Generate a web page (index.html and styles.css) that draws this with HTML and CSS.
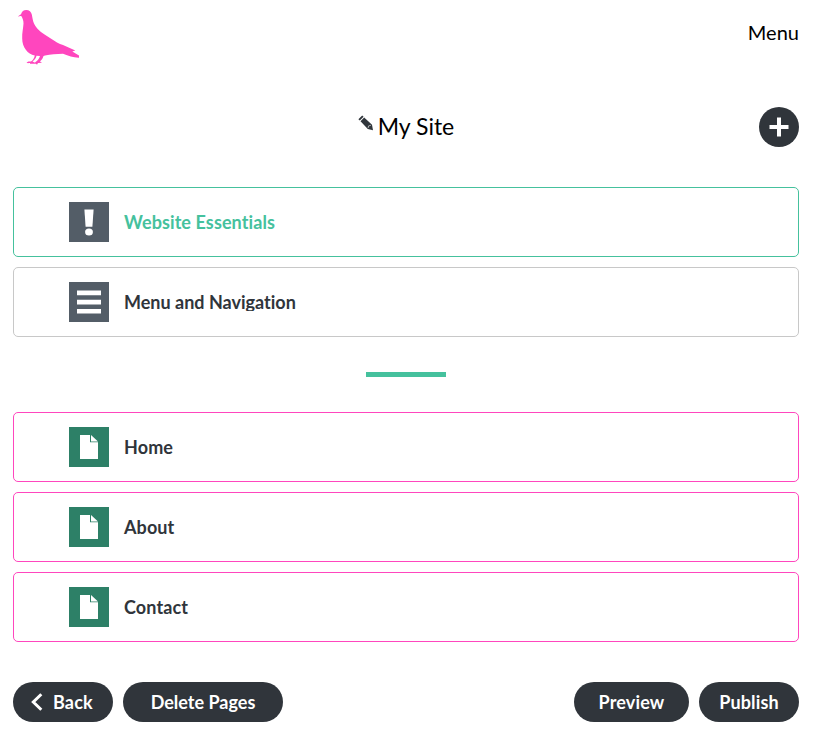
FILE: index.html
```html
<!DOCTYPE html>
<html lang="en">
<head>
<meta charset="utf-8">
<title>My Site</title>
<link rel="stylesheet" href="styles.css">
</head>
<body>
<header class="topbar">
  <svg class="logo" viewBox="0 0 80 75" width="80" height="75" aria-label="Pigeon">
    <path fill="#ff46be" d="M8 16.700C9.200 15.300 10 15.100 11 14.300C11.700 11.200 13.700 9.900 16.200 9.900C19.400 9.900 21.200 11.700 21.800 14.500C22.500 17.900 22.800 20.700 24 23.500C26.500 29 31.500 32.800 36.500 35.700L47 42.500C49 43.700 51 44.400 53 45L65.300 50.500L62.300 51.400L69 55.500V57.700C63 57.800 59 56 53 53.800C46 54 41 54.400 35 55.400L33.500 56C32.800 58.500 31.500 60 30 61.500L32 62.800L28 63L27 64.700L26 63.700H20L20 62.600H25C27 61 29 59.500 30 56.100L26.500 55.800C26 58.500 24.500 60 22.500 61.500L24.500 62.500L20 62.700L18 63.300L16.500 62.500L18.500 61.600H21C23 60.300 24.200 58.500 24.800 55.600C21 54.500 18 52.800 16 50C13.500 47 12.200 43 12.200 38.500C11.900 33 13.300 28 13.500 23.500C13.500 20.500 12.500 18.300 11.500 16.300C10.500 15.900 9.500 16 8 16.700Z"/>
  </svg>
  <a class="menu">Menu</a>
</header>

<main class="page">
  <div class="heading">
    <div class="site-name">
      <svg class="pencil" viewBox="0 0 16 16" width="16" height="16">
        <path fill="#30353b" d="M.4 4.200 4.200.400 5.600 1.800 1.800 5.600ZM2.500 6.200 6.200 2.500 14 9.700 15 15.200 9.800 14Z"/>
        <path fill="none" stroke="#fff" stroke-width=".6" d="m10.100 13 .5-2.100 2.300-.6"/>
      </svg>
      <h1>My Site</h1>
    </div>
    <button class="add" aria-label="Add">
      <svg viewBox="0 0 20 20" width="20" height="20"><path fill="#fff" d="M8 .5h4V8h7.500v4H12v7.500H8V12H.5V8H8Z"/></svg>
    </button>
  </div>

  <ul class="rows">
    <li class="row essentials">
      <svg class="icon" viewBox="0 0 40 40"><path fill="#fff" d="M15.400 7.500h9.200l-1.200 17.300h-6.800Z"/><ellipse cx="20" cy="30" rx="3.900" ry="3.600" fill="#fff"/></svg>
      <span class="label">Website Essentials</span>
    </li>
    <li class="row navigation">
      <svg class="icon" viewBox="0 0 40 40"><path fill="#fff" d="M8 8.500h24v4.800H8ZM8 17.800h24v4.700H8ZM8 27h24v4.600H8Z"/></svg>
      <span class="label">Menu and Navigation</span>
    </li>
  </ul>

  <div class="divider"></div>

  <ul class="rows">
    <li class="row web-page">
      <svg class="icon" viewBox="0 0 40 40"><path fill="#fff" d="M11 8h10v7.300h8V32H11ZM22 8 29 14.500H22Z"/></svg>
      <span class="label">Home</span>
    </li>
    <li class="row web-page">
      <svg class="icon" viewBox="0 0 40 40"><path fill="#fff" d="M11 8h10v7.300h8V32H11ZM22 8 29 14.500H22Z"/></svg>
      <span class="label">About</span>
    </li>
    <li class="row web-page">
      <svg class="icon" viewBox="0 0 40 40"><path fill="#fff" d="M11 8h10v7.300h8V32H11ZM22 8 29 14.500H22Z"/></svg>
      <span class="label">Contact</span>
    </li>
  </ul>

  <footer class="actions">
    <button class="button back">
      <svg viewBox="0 0 12 18" width="12" height="18"><path fill="none" stroke="#fff" stroke-width="3" d="M10.300 1.200 2.300 9l8 7.800"/></svg>
      Back
    </button>
    <button class="button delete">Delete Pages</button>
    <button class="button preview">Preview</button>
    <button class="button publish">Publish</button>
  </footer>
</main>
</body>
</html>
```
FILE: styles.css
```css
* {
  box-sizing: border-box;
}

body {
  margin: 0;
  background: #fff;
  color: #000;
  font-family: Lato, sans-serif;
  font-variant-ligatures: none;
}

.topbar {
  display: flex;
  justify-content: space-between;
  height: 75px;
  padding: 0 24px 0 10px;
}

.logo {
  display: block;
}

.menu {
  margin-top: 19px;
  font-size: 20px;
  line-height: 26px;
}

.page {
  padding: 32px 24px 0 13px;
}

.heading {
  display: grid;
  grid-template-columns: 40px 1fr 40px;
  height: 40px;
  margin-bottom: 40px;
}

.site-name {
  grid-column: 2;
  display: flex;
  justify-content: center;
  gap: 4px;
}

.pencil {
  margin-top: 8px;
}

h1 {
  margin: 0;
  font-size: 23px;
  font-weight: 400;
  line-height: 39px;
}

button {
  padding: 0;
  border: 0;
  background: #30353b;
  color: #fff;
  font-family: inherit;
  font-variant-ligatures: none;
}

.add {
  grid-column: 3;
  display: flex;
  align-items: center;
  justify-content: center;
  border-radius: 50%;
}

.rows {
  display: flex;
  flex-direction: column;
  gap: 10px;
  margin: 0;
  padding: 0;
  list-style: none;
}

.row {
  display: flex;
  align-items: center;
  gap: 15px;
  height: 70px;
  padding-left: 55px;
  border: 1px solid #c8c8c8;
  border-radius: 5px;
  color: #30353b;
}

.icon {
  width: 40px;
  height: 40px;
  background: #535d67;
}

.label {
  font-size: 18px;
  font-weight: 700;
  line-height: 18px;
}

.navigation .label {
  overflow: hidden;
}

.essentials {
  border-color: #45c19d;
  color: #45c19d;
  letter-spacing: .1px;
}

.web-page {
  border-color: #ff46be;
  letter-spacing: .1px;
}

.web-page .icon {
  background: #2d8067;
}

.divider {
  width: 80px;
  height: 5px;
  margin: 35px auto;
  background: #45c19d;
}

.actions {
  display: flex;
  gap: 10px;
  margin-top: 40px;
}

.button {
  height: 40px;
  border-radius: 20px;
  font-size: 18px;
  font-weight: 700;
  line-height: 40px;
}

.back {
  display: flex;
  align-items: center;
  gap: 10px;
  width: 100px;
  padding-left: 18px;
  letter-spacing: .15px;
}

.delete {
  width: 160px;
}

.preview {
  width: 115px;
  margin-left: auto;
  letter-spacing: .15px;
}

.publish {
  width: 100px;
  letter-spacing: .15px;
}
```
